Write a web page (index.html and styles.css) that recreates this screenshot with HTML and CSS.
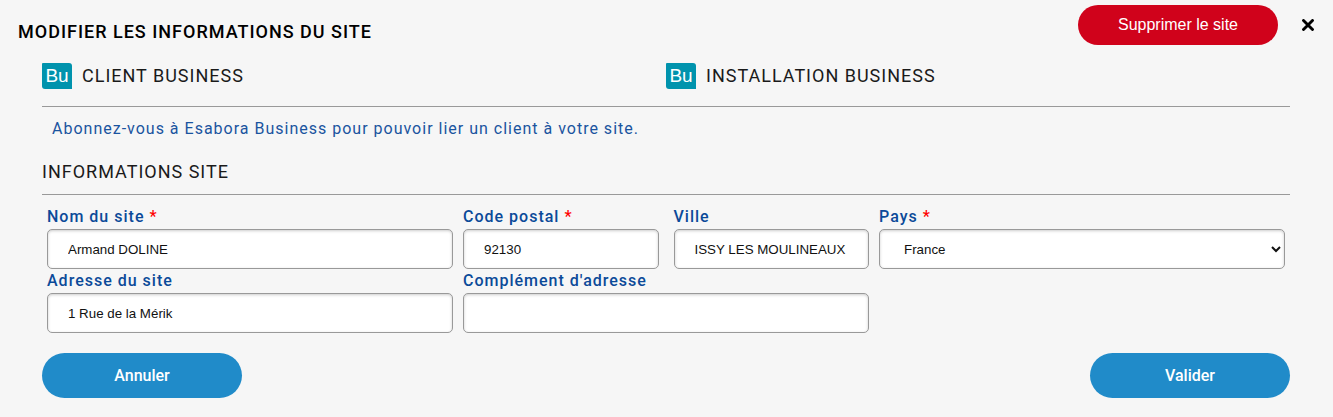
FILE: index.html
```html
<!DOCTYPE html>
<html lang="fr">
<head>
<meta charset="utf-8">
<title>Modifier les informations du site</title>
<link rel="stylesheet" href="styles.css">
</head>
<body>
<header class="top">
  <h1 class="title">MODIFIER LES INFORMATIONS DU SITE</h1>
  <button class="btn btn-danger" type="button">Supprimer le site</button>
  <button class="close" type="button" aria-label="Fermer"><svg viewBox="0 0 12 12" width="12" height="12"><path d="M1.5 1.5L10.5 10.5M10.5 1.5L1.5 10.5" stroke="#000" stroke-width="2.9" stroke-linecap="round"/></svg></button>
</header>
<form class="content">
  <div class="heads">
    <h2 class="head"><span class="logo">Bu</span>CLIENT BUSINESS</h2>
    <h2 class="head"><span class="logo">Bu</span>INSTALLATION BUSINESS</h2>
  </div>
  <p class="note">Abonnez-vous à Esabora Business pour pouvoir lier un client à votre site.</p>
  <h2 class="section">INFORMATIONS SITE</h2>
  <div class="fields">
    <div class="field"><label for="nom">Nom du site <span class="req">*</span></label><input id="nom" type="text" value="Armand DOLINE"></div>
    <div class="pair">
      <div class="field"><label for="cp">Code postal <span class="req">*</span></label><input id="cp" type="text" value="92130"></div>
      <div class="field"><label for="ville">Ville</label><input id="ville" type="text" value="ISSY LES MOULINEAUX"></div>
    </div>
    <div class="field"><label for="pays">Pays <span class="req">*</span></label><select id="pays"><option>France</option></select></div>
    <div class="field"><label for="adr">Adresse du site</label><input id="adr" type="text" value="1 Rue de la Mérik"></div>
    <div class="field"><label for="comp">Complément d'adresse</label><input id="comp" type="text"></div>
  </div>
  <div class="actions">
    <button class="btn btn-primary" type="button">Annuler</button>
    <button class="btn btn-primary" type="submit">Valider</button>
  </div>
</form>
</body>
</html>
```
FILE: styles.css
```css
* { box-sizing: border-box; }
body { margin: 0; background: #f6f6f6; color: #000; font-family: Roboto, sans-serif; font-size: 16px; letter-spacing: 1px; }
h1, h2, p { margin: 0; }
.top { display: flex; align-items: flex-start; padding: 5px 19px 0 18px; }
.title { flex: 1; font-size: 18px; line-height: 20px; font-weight: 500; padding-top: 17px; }
.btn { width: 200px; border: 0; border-radius: 23px; color: #fff; font-size: 16px; }
.btn-danger { height: 40px; background: #d0021b; font-family: "Liberation Sans", Arial, sans-serif; }
.close { border: 0; background: none; padding: 0; width: 12px; height: 40px; margin-left: 24px; display: flex; align-items: center; justify-content: center; }
.content { padding: 0 43px 0 42px; }
.heads { display: grid; grid-template-columns: 1fr 1fr; align-items: start; padding-top: 16px; height: 62px; border-bottom: 1px solid #999; }
.head, .section { font-size: 18px; line-height: 30px; font-weight: 400; color: #1a1a1a; }
.head { display: flex; align-items: center; gap: 10px; }
.logo { width: 30px; height: 26px; line-height: 26px; border-radius: 1px 3px 0 3px; background: #0093ad; color: #fff; font-family: "Liberation Sans", Arial, sans-serif; font-size: 19px; text-align: center; letter-spacing: 0; }
.note { padding: 12px 10px 0; line-height: 20px; color: #1a549f; }
.section { padding: 18px 0 7px; border-bottom: 1px solid #999; }
.fields { display: grid; grid-template-columns: repeat(3, 1fr); gap: 2px 10px; padding: 12px 5px 0; }
.pair { display: grid; grid-template-columns: 1fr 1fr; gap: 15px; }
.field { min-width: 0; }
label { display: block; color: #0b4a99; font-weight: 500; line-height: 20px; height: 22px; }
.req { color: #f00; }
input, select { display: block; width: 100%; height: 40px; padding: 0 20px; border: 1px solid #999; border-radius: 5px; background: #fff; box-shadow: inset 0 1px 3px #ccc; font-family: "Liberation Sans", Arial, sans-serif; color: #111; }
.actions { display: flex; justify-content: space-between; padding-top: 20px; }
.btn-primary { height: 45px; background: #208bc9; font-family: Roboto, sans-serif; font-weight: 500; }
```
